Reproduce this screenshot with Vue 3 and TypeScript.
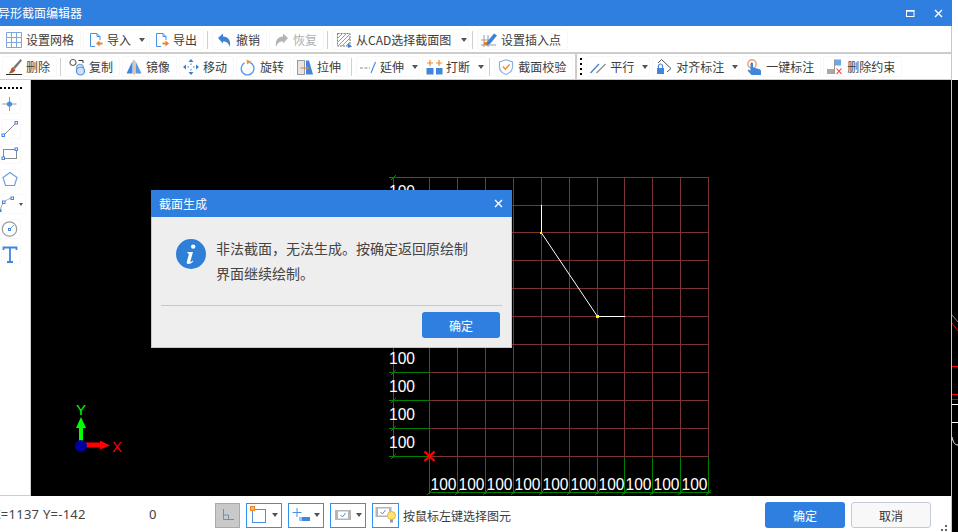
<template>
  <div class="screen">
    <div class="window">
      <!-- 标题栏 -->
      <div class="title-bar">
        <span class="title-text">异形截面编辑器</span>
        <svg class="win-btn max" width="9" height="7" viewBox="0 0 9 7"><rect x="0.5" y="1" width="7.5" height="5.5" fill="none" stroke="#fff" /><rect x="0" y="0" width="8.5" height="1.4" fill="#fff" /></svg>
        <svg class="win-btn close" width="9" height="9" viewBox="0 0 9 9"><path d="M1 1 8 8M8 1 1 8" stroke="#fff" stroke-width="1.4" /></svg>
      </div>

      <!-- 工具栏 -->
      <div class="tool-row first">
        <template v-for="(item, i) in rowOne" :key="i">
          <i v-if="item.sep" class="sep"></i>
          <div v-else class="tool-btn" :class="{ disabled: item.disabled, long: item.long }">
            <svg class="tool-icon" viewBox="0 0 16 16" v-html="icons[item.icon!]"></svg>
            <span>{{ item.label }}</span>
            <i v-if="item.arrow" class="caret"></i>
          </div>
        </template>
      </div>
      <div class="tool-row second">
        <template v-for="(item, i) in rowTwo" :key="i">
          <i v-if="item.sep" class="sep"></i>
          <template v-else-if="item.grip">
            <i class="bar"></i>
            <i class="dots"></i>
          </template>
          <div v-else class="tool-btn">
            <svg class="tool-icon" viewBox="0 0 16 16" v-html="icons[item.icon!]"></svg>
            <span>{{ item.label }}</span>
            <i v-if="item.arrow" class="caret"></i>
          </div>
        </template>
      </div>

      <div class="workspace">
        <div class="side-bar">
          <i class="side-dots"></i>
          <div v-for="tool in sideTools" :key="tool" class="side-btn" :class="{ wide: tool === 'arc' }">
            <svg width="20" height="20" viewBox="0 0 20 20" v-html="sideIcons[tool]"></svg>
            <i v-if="tool === 'arc'" class="caret small"></i>
          </div>
        </div>

        <!-- 绘图区 -->
        <div class="canvas">
          <svg class="drawing" viewBox="31 80 920 416">
            <g shape-rendering="crispEdges">
              <line v-for="x in gridX" :key="'v' + x" :x1="x" y1="177" :x2="x" y2="456.5" stroke="#7a3436" />
              <line v-for="y in gridY" :key="'h' + y" x1="429" :y1="y" x2="709" :y2="y" stroke="#7a3436" />
              <line x1="393.5" y1="177" x2="393.5" y2="458" stroke="#008000" />
              <line v-for="y in greenY" :key="'g' + y" x1="389" :y1="y" x2="429" :y2="y" stroke="#008000" />
              <line v-for="x in gridX" :key="'b' + x" :x1="x" y1="456.5" :x2="x" y2="494" stroke="#008000" />
              <line x1="429" y1="492.5" x2="711" y2="492.5" stroke="#008000" />
            </g>
            <path v-for="y in greenY" :key="'t' + y" :d="`M391 ${y + 2.5}L396 ${y - 2.5}`" stroke="#008000" />
            <path v-for="x in gridX" :key="'u' + x" :d="`M${x - 2.5} 495L${x + 2.5} 490`" stroke="#008000" />

            <text v-for="y in leftLabels" :key="'l' + y" x="389" :y="y" class="dim" textLength="26" lengthAdjust="spacingAndGlyphs">100</text>
            <text v-for="x in gridX.slice(0, 10)" :key="'n' + x" :x="x + 1" y="490" class="dim" textLength="26" lengthAdjust="spacingAndGlyphs">100</text>

            <path d="M541.5 205V233L597.5 316.5H625" fill="none" stroke="#fff" />
            <rect x="540" y="232" width="2" height="2" fill="#ff0" />
            <rect x="596" y="315" width="3" height="3" fill="#ff0" />
            <path d="M424.5 451.5 434.5 461M434.5 451.5 424.5 461" stroke="#f00" stroke-width="2.4" />

            <!-- 坐标轴 -->
            <path d="M79 446V428H76L81 417 86 428H83V446Z" fill="#0f0" />
            <path d="M80 443H100V441L110 446 100 450V448H80Z" fill="#f00" transform="translate(0 -0.5)" />
            <circle cx="81" cy="446" r="6" fill="#00009c" />
            <text x="76" y="415" class="axis" fill="#0f0">Y</text>
            <text x="112" y="452" class="axis" fill="#f00">X</text>
          </svg>
        </div>
      </div>

      <div class="status-bar">
        <span class="coords">X=1137 Y=-142</span>
        <span class="zero">0</span>
        <div class="mode-btn off">
          <svg width="16" height="16" viewBox="0 0 16 16"><path d="M3.5 2V12.5H14M3.5 8H8.5V12.5" fill="none" stroke="#6d8fb5" /></svg>
        </div>
        <div class="mode-btn wide">
          <svg width="18" height="18" viewBox="0 0 18 18"><rect x="2.5" y="3.5" width="13" height="13" fill="none" stroke="#4a90e2" /><rect x="0.5" y="0.5" width="4" height="4" fill="#f6b26b" stroke="#ef8a2a" /></svg>
          <i class="caret"></i>
        </div>
        <div class="mode-btn wide">
          <svg width="18" height="18" viewBox="0 0 18 18"><path d="M5 2V11M0.5 6.5H9.5" stroke="#4a90e2" fill="none" /><rect x="7" y="11" width="11" height="4" fill="#3f86dc" /><rect x="7" y="11" width="3" height="4" fill="#9cc4ee" /></svg>
          <i class="caret"></i>
        </div>
        <div class="mode-btn wide">
          <svg width="18" height="18" viewBox="0 0 18 18"><rect x="1" y="4" width="16" height="10" fill="#b5b5b5" /><rect x="4" y="5.5" width="10" height="7" fill="#fff" /><path d="M6.5 9 8.5 11 11.5 7" fill="none" stroke="#4a90e2" /></svg>
          <i class="caret"></i>
        </div>
        <div class="mode-btn tip">
          <svg width="22" height="20" viewBox="0 0 22 20"><rect x="0.5" y="2" width="16" height="10" fill="#b5b5b5" /><rect x="3" y="3.5" width="11" height="7" fill="#fff" /><path d="M5.5 7 7.5 9 10.5 5" fill="none" stroke="#4a90e2" /><circle cx="16.5" cy="10.5" r="4" fill="#ffe27a" stroke="#e8b93a" /><rect x="15" y="14.5" width="3" height="3" fill="#999" /></svg>
        </div>
        <span class="hint">按鼠标左键选择图元</span>
        <button class="act primary">确定</button>
        <button class="act plain">取消</button>
        <svg class="grip" width="6" height="6" viewBox="0 0 6 6"><path d="M4 0H6V2H4ZM0 4H2V6H0ZM4 4H6V6H4Z" fill="#666" /></svg>
      </div>
    </div>

    <!-- 右侧露出的背景 -->
    <div class="sliver">
      <div class="sliver-top"></div>
      <svg class="sliver-draw" viewBox="952 80 6 452">
        <path d="M952 315 958 322" stroke="#888" fill="none" />
        <path d="M952 323 958 331" stroke="#e00" fill="none" />
        <g shape-rendering="crispEdges">
          <line x1="952" y1="366.5" x2="958" y2="366.5" stroke="#f00" />
          <line x1="952" y1="394.5" x2="958" y2="394.5" stroke="#f00" />
          <line x1="952" y1="399.5" x2="958" y2="399.5" stroke="#c00" />
          <line x1="952" y1="404.5" x2="958" y2="404.5" stroke="#fff" />
          <line x1="952" y1="422.5" x2="958" y2="422.5" stroke="#fff" />
        </g>
        <path d="M952 437C953 441 954 445 958 445" stroke="#fff" fill="none" />
      </svg>
    </div>

    <!-- 提示框 -->
    <div class="dialog">
      <div class="dialog-head">
        <span>截面生成</span>
        <svg width="9" height="9" viewBox="0 0 9 9"><path d="M1 1 8 8M8 1 1 8" stroke="#fff" stroke-width="1.4" /></svg>
      </div>
      <div class="dialog-body">
        <svg class="info" width="30" height="30" viewBox="0 0 30 30">
          <circle cx="15" cy="15" r="15" fill="#2e7fd6" />
          <circle cx="17.2" cy="7.6" r="2.2" fill="#fff" />
          <path d="M11.5 13H17L14.4 22.2C14.2 23 15 23.2 15.6 22.6L16.8 21.4 17.3 22C15.8 24.2 14.3 25 12.6 25 11 25 10.5 24 10.9 22.6L12.8 15.4C13 14.6 12.4 14.3 11.3 14.2Z" fill="#fff" />
        </svg>
        <p class="message">非法截面，无法生成。按确定返回原绘制<br />界面继续绘制。</p>
      </div>
      <div class="dialog-foot">
        <button class="act primary ok">确定</button>
      </div>
    </div>
  </div>
</template>

<script setup lang="ts">
interface ToolItem {
  label?: string
  icon?: string
  arrow?: boolean
  disabled?: boolean
  long?: boolean
  sep?: boolean
  grip?: boolean
}

const rowOne: ToolItem[] = [
  { label: '设置网格', icon: 'grid' },
  { label: '导入', icon: 'import', arrow: true },
  { label: '导出', icon: 'export' },
  { sep: true },
  { label: '撤销', icon: 'undo' },
  { label: '恢复', icon: 'redo', disabled: true },
  { sep: true },
  { label: '从CAD选择截面图', icon: 'cad', arrow: true, long: true },
  { sep: true },
  { label: '设置插入点', icon: 'insert' }
]

const rowTwo: ToolItem[] = [
  { label: '删除', icon: 'erase' },
  { sep: true },
  { label: '复制', icon: 'copy' },
  { label: '镜像', icon: 'mirror' },
  { label: '移动', icon: 'move' },
  { label: '旋转', icon: 'rotate' },
  { label: '拉伸', icon: 'stretch' },
  { sep: true },
  { label: '延伸', icon: 'extend', arrow: true },
  { label: '打断', icon: 'split', arrow: true },
  { sep: true },
  { label: '截面校验', icon: 'shield' },
  { grip: true },
  { label: '平行', icon: 'parallel', arrow: true },
  { label: '对齐标注', icon: 'align', arrow: true },
  { label: '一键标注', icon: 'hand' },
  { label: '删除约束', icon: 'unlink' }
]

const icons: Record<string, string> = {
  grid: '<path d="M0.5 0.5H15.5V15.5H0.5ZM5.5 0.5V15.5M10.5 0.5V15.5M0.5 5.5H15.5M0.5 10.5H15.5" fill="none" stroke="#7fa6d6"/>',
  import: '<path d="M3.5 1.5H10L13 4.5V8M3.5 1.5V14.5H8" fill="none" stroke="#4a90e2"/><path d="M10 1.5V4.5H13" fill="none" stroke="#4a90e2"/><path d="M9 11.5 12.5 8.5V10.5H15.5V12.5H12.5V14.5Z" fill="#f0802a"/>',
  export: '<path d="M3.5 1.5H10L13 4.5V8M3.5 1.5V14.5H8" fill="none" stroke="#4a90e2"/><path d="M10 1.5V4.5H13" fill="none" stroke="#4a90e2"/><path d="M16 11.5 12.5 8.5V10.5H9.5V12.5H12.5V14.5Z" fill="#f0802a"/>',
  undo: '<path d="M2 6 7 1.5V4.5C12 4.5 15 8 14 15 12.8 11.5 11 9.5 7 9.5V11.5Z" fill="#3f82cf"/>',
  redo: '<path d="M15 6 10 1.5V4.5C5 4.5 2 8 3 15 4.2 11.5 6 9.5 10 9.5V11.5Z" fill="#b4b4b4"/>',
  cad: '<rect x="1.5" y="1.5" width="12.5" height="12.5" fill="none" stroke="#777" stroke-dasharray="2 1"/><path d="M2 6 6 2M2 10 10 2M2 14 14 2M6 14 14 6M10 14 14 10" stroke="#999"/><path d="M12 11 16 14.5 12 16Z" fill="#3f82cf"/>',
  insert: '<path d="M3 3V15M7 3V15M0 8H11M0 13H15" stroke="#9a9a9a"/><rect x="3" y="10" width="3" height="3" fill="#ef7d22"/><path d="M6 10 13 1.5 16 3.5 9 12 5.5 13.5Z" fill="#3f82cf"/>',
  erase: '<path d="M0 15.5H16" stroke="#333"/><path d="M7 8.5 14.5 0 16 1.5 9 10Z" fill="#777"/><path d="M6.5 8 9.5 11C8 13.5 6 14.5 2.5 14.5 4.5 13 4.5 10.5 6.5 8Z" fill="#b3562a"/>',
  copy: '<circle cx="4" cy="3.5" r="3" fill="none" stroke="#666" stroke-width="1.2"/><path d="M9.5 1.5H14V4" fill="none" stroke="#333"/><circle cx="11" cy="9" r="3.5" fill="none" stroke="#7aa6d8" stroke-width="1.4"/><circle cx="11.5" cy="12" r="4" fill="#cfe0f4" stroke="#4a90e2" stroke-width="1.2"/>',
  mirror: '<path d="M6.5 2V14.5H0.5Z" fill="#3f86dc"/><path d="M8 1V15.5" stroke="#c78a3a"/><path d="M9.5 2 15.5 14.5H9.5Z" fill="#5a9ae2"/>',
  move: '<path d="M8 0 10.5 3H5.5ZM8 16 5.5 13H10.5ZM0 8 3 5.5V10.5ZM16 8 13 10.5V5.5Z" fill="#2f7fd6"/><path d="M8 4.5V6M8 10V11.5M4.5 8H6M10 8H11.5" stroke="#7aa6d8" stroke-width="1.4"/>',
  rotate: '<path d="M9.5 3.4A6.4 6.4 0 1 1 4.5 3.9" fill="none" stroke="#5a9ae2" stroke-width="1.4"/><path d="M6.5 0.5 11.5 2.5 7 5.5Z" fill="#ef9a3a"/>',
  stretch: '<rect x="0.5" y="1.5" width="7" height="14" fill="#e6e6e6" stroke="#999"/><path d="M9 1.5H12L16 15.5H9Z" fill="#3f86dc"/><path d="M3.5 9H10" stroke="#ef7d22"/><path d="M10 7 12.5 9 10 11Z" fill="#ef7d22"/>',
  extend: '<path d="M0 9H10" stroke="#7a8ea8" stroke-dasharray="3 1.5"/><path d="M11 14 15.5 3" stroke="#3f86dc" stroke-width="1.1"/>',
  split: '<rect x="0.5" y="9" width="7" height="6.5" fill="#3f86dc"/><rect x="10" y="9" width="6.5" height="6.5" fill="#3f86dc"/><path d="M4 1V7M1 4H7M13 1V7M10 4H16" stroke="#ef8a2a" stroke-width="1.2"/>',
  shield: '<path d="M8 0.8 14.5 3V8C14.5 11.5 11.5 14.2 8 15.5 4.5 14.2 1.5 11.5 1.5 8V3Z" fill="none" stroke="#8ab2e2" stroke-width="1.2"/><path d="M4.8 7.6 7.4 10.2 11.6 5.4" fill="none" stroke="#ef8a2a" stroke-width="1.4"/>',
  parallel: '<path d="M0.5 14 9 5" stroke="#3f82cf" stroke-width="1.2"/><path d="M6.5 14 15.5 5" stroke="#8c8c8c" stroke-width="1.2"/>',
  align: '<rect x="1" y="9" width="7" height="6" fill="#3f86dc"/><path d="M2.5 9V7A2 2 0 0 1 6.5 7V9" fill="none" stroke="#3f86dc" stroke-width="1.2"/><path d="M2 4 5.5 0.5M5.5 0.5 15 9.5M11 13 15 9.5" fill="none" stroke="#555"/>',
  hand: '<circle cx="6" cy="5" r="4.2" fill="none" stroke="#f0a070" stroke-width="1.4"/><path d="M4.5 4.5C4.5 3 7 3 7 4.5V8.5L13 10C14.5 10.5 15 11 15 12.5V16H5.5L1.5 11.5 2.5 10.5 4.5 11.5Z" fill="#3f86dc"/>',
  unlink: '<rect x="0" y="10" width="7" height="5" fill="#a8a8a8"/><rect x="7" y="0.5" width="7" height="6" fill="#6aa8ea"/><path d="M7.5 1V15" stroke="#999"/><path d="M9.5 9.5 14.5 15M14.5 9.5 9.5 15" stroke="#e33" stroke-width="1.1"/>'
}

const sideTools = ['point', 'line', 'rect', 'poly', 'arc', 'circle', 'text']

const sideIcons: Record<string, string> = {
  point: '<path d="M9.5 3V17M2.5 10H16.5" stroke="#999"/><circle cx="9.5" cy="10" r="2.6" fill="#4a90e2"/>',
  line: '<path d="M3.5 16.5 16 4" stroke="#888"/><rect x="2" y="15" width="2.5" height="2.5" fill="#fff" stroke="#3f86dc"/><rect x="15" y="2.5" width="2.5" height="2.5" fill="#fff" stroke="#3f86dc"/>',
  rect: '<rect x="3.5" y="5.5" width="13" height="9" fill="none" stroke="#888"/><rect x="2" y="13" width="2.5" height="2.5" fill="#fff" stroke="#3f86dc"/><rect x="15" y="4" width="2.5" height="2.5" fill="#fff" stroke="#3f86dc"/>',
  poly: '<path d="M10 3.5 17 8.5 14.5 16.5H5.5L3 8.5Z" fill="none" stroke="#6aa0e0" stroke-width="1.2"/>',
  arc: '<path d="M0.5 16C1 10 6 5 12 4" fill="none" stroke="#aaa"/><rect x="2.5" y="7" width="2.5" height="2.5" fill="#fff" stroke="#3f86dc"/><rect x="11" y="3" width="2.5" height="2.5" fill="#fff" stroke="#3f86dc"/><rect x="-0.5" y="15.5" width="2" height="2.5" fill="#3f86dc"/>',
  circle: '<circle cx="9.5" cy="10" r="7.2" fill="none" stroke="#999" stroke-width="1.2"/><path d="M10 10 14 6" stroke="#6aa0e0"/><rect x="8.5" y="9.5" width="2" height="2" fill="#fff" stroke="#3f86dc"/>',
  text: '<path d="M3.5 6V3.5H16.5V6M10 3.5V18M7 18H13" fill="none" stroke="#3f86dc" stroke-width="1.8"/>'
}

const gridX = [429.5, 457.5, 485.5, 513.5, 541.5, 569.5, 597.5, 624.5, 652.5, 680.5, 708.5]
const gridY = [177.5, 205.5, 232.5, 260.5, 288.5, 316.5, 344.5, 372.5, 400.5, 428.5, 456.5]
const greenY = [177.5, 344.5, 372.5, 400.5, 428.5, 456.5]
const leftLabels = [197, 364, 392, 420, 448]
</script>

<style scoped>
.screen {
  position: relative;
  display: flex;
  width: 958px;
  height: 532px;
  overflow: hidden;
  background: #fff;
  font-family: "Noto Sans CJK SC", "Liberation Sans", sans-serif;
  font-size: 12px;
  color: #3c3c3c;
}

.window {
  display: flex;
  flex-direction: column;
  width: 952px;
  height: 532px;
  flex: none;
  border-right: 1px solid #c4c7cf;
  box-sizing: border-box;
  position: relative;
}

.title-bar {
  display: flex;
  align-items: center;
  height: 26px;
  flex: none;
  background: #2e7fe0;
  color: #fff;
  margin-right: -1px;
}

.title-text {
  margin-left: -2px;
  line-height: 26px;
}

.win-btn.max {
  margin-left: auto;
}

.win-btn.close {
  margin: 0 9px 0 19px;
}

.tool-row {
  display: flex;
  align-items: center;
  gap: 2px;
  height: 25px;
  padding-left: 2px;
  flex: none;
  background: #fff;
}

.tool-row.first {
  margin-top: 1px;
  border-bottom: 2px solid #cdcdcd;
  height: 27px;
  box-sizing: border-box;
  padding-bottom: 2px;
  padding-top: 2px;
}

.tool-row.second {
  height: 26px;
  box-sizing: border-box;
  border-bottom: 1px solid #cdcdcd;
}

.tool-btn {
  display: flex;
  align-items: center;
  height: 21px;
  padding: 0 7px 0 4px;
  box-sizing: border-box;
  border-radius: 3px;
  box-shadow: 0 0 0 1px #f8f8f8 inset;
  white-space: nowrap;
}

.tool-btn.disabled {
  color: #b0b0b0;
}

.tool-btn.long span {
  width: 97px;
}

.tool-icon {
  width: 16px;
  height: 16px;
  margin-right: 4px;
  flex: none;
  overflow: visible;
}

.caret {
  width: 0;
  height: 0;
  margin: 0 -5px 0 8px;
  border-left: 3px solid transparent;
  border-right: 3px solid transparent;
  border-top: 4px solid #555;
}

.sep {
  width: 1px;
  height: 18px;
  margin: 0 2px 0 1px;
  background: #d0d0d0;
}

.bar {
  width: 2px;
  height: 25px;
  background: #cdcdcd;
}

.dots {
  width: 2px;
  height: 18px;
  margin: 0 2px 0 1px;
  background: repeating-linear-gradient(to bottom, #000 0 2px, transparent 2px 5px);
}

.workspace {
  display: flex;
  flex: 1;
  min-height: 0;
}

.side-bar {
  display: flex;
  flex-direction: column;
  gap: 5px;
  width: 31px;
  flex: none;
  box-sizing: border-box;
  padding: 7px 0 0 1px;
  border-right: 1px solid #cdcdcd;
  border-bottom: 1px solid #cdcdcd;
  background: #fff;
}

.side-dots {
  width: 22px;
  height: 2px;
  margin: 0 0 0 -1px;
  background: repeating-linear-gradient(to right, #000 0 2px, transparent 2px 4px);
}

.side-btn {
  display: flex;
  align-items: center;
  width: 20px;
  height: 20px;
  border-radius: 3px;
  box-shadow: 0 0 0 1px #f8f8f8 inset;
  flex: none;
}

.side-btn.wide {
  width: 25px;
}

.side-btn svg {
  overflow: visible;
  flex: none;
  margin-left: -1px;
}

.caret.small {
  margin: 0;
  margin-left: -1px;
  border-left-width: 2.5px;
  border-right-width: 2.5px;
  border-top-width: 3px;
}

.canvas {
  flex: 1;
  background: #000;
  min-width: 0;
}

.drawing {
  display: block;
  width: 920px;
  height: 416px;
}

.dim {
  font-family: "Liberation Sans", sans-serif;
  font-size: 17px;
  fill: #fff;
}

.axis {
  font-family: "Liberation Sans", sans-serif;
  font-size: 15px;
}

.status-bar {
  display: flex;
  align-items: center;
  height: 36px;
  flex: none;
  background: #fff;
}

.coords {
  width: 149px;
  margin-left: -7px;
  margin-right: 7px;
  font-family: "Noto Sans", sans-serif;
  font-size: 13px;
  letter-spacing: 0.25px;
  white-space: nowrap;
  color: #444;
}

.zero {
  width: 66px;
  font-family: "Noto Sans", sans-serif;
  font-size: 13px;
}

.mode-btn {
  display: flex;
  align-items: center;
  justify-content: center;
  box-sizing: border-box;
  width: 25px;
  height: 25px;
  margin-top: 2px;
  margin-right: 6px;
  border: 1px solid #2f93ee;
  flex: none;
}

.mode-btn.off {
  background: #c9c9c9;
  border-color: #a9a9a9;
}

.mode-btn.wide {
  width: 36px;
  justify-content: flex-start;
  padding-left: 3px;
}

.mode-btn.wide .caret {
  margin: 0 0 0 4px;
}

.mode-btn.tip {
  width: 27px;
  margin-right: 4px;
}

.hint {
  white-space: nowrap;
  margin-top: 3px;
}

.act {
  width: 80px;
  height: 26px;
  padding: 0;
  box-sizing: border-box;
  border-radius: 3px;
  font: inherit;
  border: 0;
  flex: none;
}

.primary {
  background: #2e7fe0;
  color: #fff;
}

.status-bar .primary {
  margin-left: auto;
  margin-top: 2px;
}

.plain {
  margin: 2px 20px 0 6px;
  background: #f8f8f8;
  border: 1px solid #c4cad8;
  color: #333;
}

.grip {
  position: absolute;
  right: 4px;
  bottom: 1px;
}

.sliver {
  display: flex;
  flex-direction: column;
  width: 6px;
  flex: none;
}

.sliver-top {
  height: 80px;
  flex: none;
  background: #fff;
}

.sliver-draw {
  display: block;
  width: 6px;
  height: 452px;
  background: #000;
}

.dialog {
  position: absolute;
  left: 151px;
  top: 190px;
  width: 361px;
  height: 158px;
  display: flex;
  flex-direction: column;
  box-sizing: border-box;
  background: #eee;
  border: 1px solid #c4c7cf;
  border-top: 0;
}

.dialog-head {
  display: flex;
  align-items: center;
  justify-content: space-between;
  height: 27px;
  padding: 0 9px 0 8px;
  margin: 0 -1px;
  flex: none;
  background: #2e7fe0;
  color: #fff;
}

.dialog-body {
  display: flex;
  flex: 1;
  padding: 22px 0 0 24px;
}

.info {
  flex: none;
  margin-top: 0;
}

.message {
  margin: -3px 0 0 10px;
  font-size: 14px;
  line-height: 25px;
  color: #444;
}

.dialog-foot {
  display: flex;
  justify-content: flex-end;
  height: 42px;
  margin: 0 9px;
  padding-top: 6px;
  box-sizing: border-box;
  border-top: 1px solid #c8c8c8;
  flex: none;
}

.ok {
  width: 78px;
  margin-right: 2px;
}
</style>
